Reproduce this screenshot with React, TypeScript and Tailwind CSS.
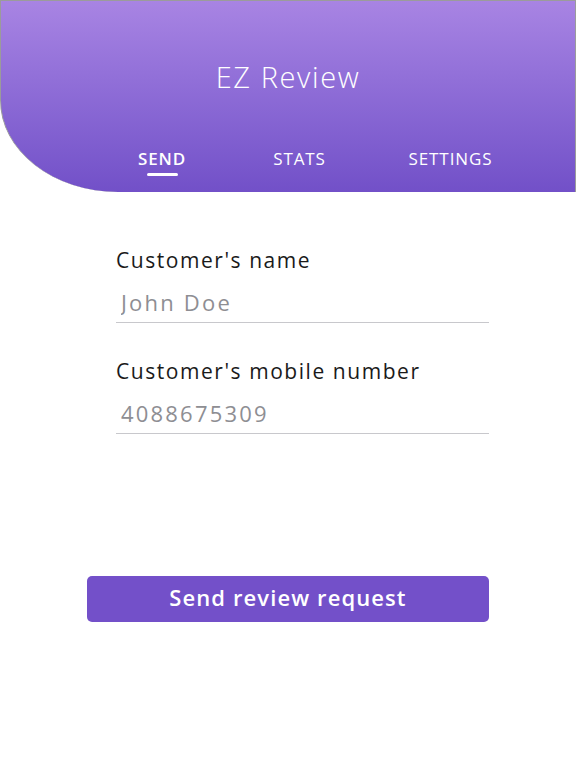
import { useState } from 'react';

const tabs = ['SEND', 'STATS', 'SETTINGS'];

function Field({ label, placeholder }: { label: string; placeholder: string }) {
  return (
    <label className="block">
      <span className="block text-[21px] leading-[28px] tracking-[1.55px] text-[#1a1a1a]">{label}</span>
      <input
        placeholder={placeholder}
        className="mt-[14px] block w-full border-b border-[#c8c8cc] pb-[6px] pl-[5px] text-[22px] leading-[28px] tracking-[2.2px] text-[#1a1a1a] outline-none placeholder:text-[#8e8e93]"
      />
    </label>
  );
}

export default function App() {
  const [active, setActive] = useState(0);

  return (
    <div className="min-h-[768px] bg-white font-['Open_Sans',sans-serif]">
      {/* Header */}
      <div className="h-[192px] rounded-bl-[118px_92px] border-x border-t border-[#9b9b9b] bg-gradient-to-b from-[#a884e3] to-[#7250c8] pt-[58px]">
        <h1 className="text-center text-[29px] font-light leading-[36px] tracking-[1.6px] text-white">EZ Review</h1>
        <nav className="mt-[54px] flex pl-[137px]">
          {tabs.map((tab, i) => (
            <button
              key={tab}
              onClick={() => setActive(i)}
              className={`flex flex-col items-center text-[17px] leading-[20px] tracking-[0.9px] text-white ${
                i === 0 ? 'w-[48px]' : i === 1 ? 'ml-[85px] w-[57px]' : 'ml-[80px] w-[85px]'
              } ${active === i ? 'font-semibold' : 'font-normal'}`}
            >
              {tab}
              <span
                className={`mt-[4px] h-[3px] w-[31px] rounded-full ${active === i ? 'bg-white' : 'bg-transparent'}`}
              />
            </button>
          ))}
        </nav>
      </div>

      {/* Form */}
      <div className="ml-[116px] mr-[87px] mt-[54px] space-y-[34px]">
        <Field label="Customer's name" placeholder="John Doe" />
        <Field label="Customer's mobile number" placeholder="4088675309" />
      </div>

      <div className="ml-[87px] mr-[87px] mt-[142px]">
        <button className="h-[46px] w-full rounded-[5px] bg-[#7350c9] pb-[4px] text-[22px] font-semibold tracking-[1.1px] text-white">
          Send review request
        </button>
      </div>
    </div>
  );
}
